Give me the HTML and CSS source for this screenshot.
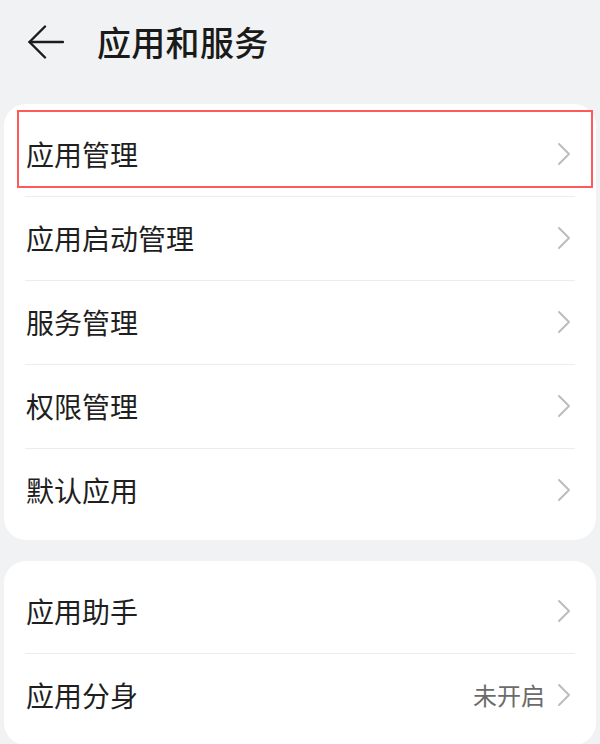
FILE: index.html
```html
<!DOCTYPE html>
<html lang="zh-CN">
<head>
<meta charset="utf-8">
<title>应用和服务</title>
<link rel="stylesheet" href="styles.css">
</head>
<body>
<div class="page">
  <header class="header">
    <svg class="back" width="36" height="34" viewBox="0 0 36 34" aria-hidden="true">
      <polyline points="17,1.5 1.5,17 17,32.5" fill="none" stroke="#1c1c1c" stroke-width="2.4" stroke-linecap="round" stroke-linejoin="round"/>
      <line x1="1.5" y1="17" x2="35" y2="17" stroke="#1c1c1c" stroke-width="2.4" stroke-linecap="round"/>
    </svg>
    <h1 class="title">应用和服务</h1>
  </header>

  <section class="card">
    <div class="highlight"></div>
    <div class="row"><span class="label">应用管理</span><span class="chev"><svg width="14" height="24" viewBox="0 0 14 24"><polyline points="2,2 12,12 2,22" fill="none" stroke="#bdbdbd" stroke-width="2" stroke-linecap="round" stroke-linejoin="round"/></svg></span></div>
    <div class="row"><span class="label">应用启动管理</span><span class="chev"><svg width="14" height="24" viewBox="0 0 14 24"><polyline points="2,2 12,12 2,22" fill="none" stroke="#bdbdbd" stroke-width="2" stroke-linecap="round" stroke-linejoin="round"/></svg></span></div>
    <div class="row"><span class="label">服务管理</span><span class="chev"><svg width="14" height="24" viewBox="0 0 14 24"><polyline points="2,2 12,12 2,22" fill="none" stroke="#bdbdbd" stroke-width="2" stroke-linecap="round" stroke-linejoin="round"/></svg></span></div>
    <div class="row"><span class="label">权限管理</span><span class="chev"><svg width="14" height="24" viewBox="0 0 14 24"><polyline points="2,2 12,12 2,22" fill="none" stroke="#bdbdbd" stroke-width="2" stroke-linecap="round" stroke-linejoin="round"/></svg></span></div>
    <div class="row"><span class="label">默认应用</span><span class="chev"><svg width="14" height="24" viewBox="0 0 14 24"><polyline points="2,2 12,12 2,22" fill="none" stroke="#bdbdbd" stroke-width="2" stroke-linecap="round" stroke-linejoin="round"/></svg></span></div>
  </section>

  <section class="card">
    <div class="row"><span class="label">应用助手</span><span class="chev"><svg width="14" height="24" viewBox="0 0 14 24"><polyline points="2,2 12,12 2,22" fill="none" stroke="#bdbdbd" stroke-width="2" stroke-linecap="round" stroke-linejoin="round"/></svg></span></div>
    <div class="row"><span class="label">应用分身</span><span class="value">未开启</span><span class="chev"><svg width="14" height="24" viewBox="0 0 14 24"><polyline points="2,2 12,12 2,22" fill="none" stroke="#bdbdbd" stroke-width="2" stroke-linecap="round" stroke-linejoin="round"/></svg></span></div>
  </section>
</div>
</body>
</html>
```

FILE: styles.css
```css
* { box-sizing: border-box; }

html, body {
  margin: 0;
  padding: 0;
  background: #f1f2f4;
}

body {
  font-family: "Noto Sans CJK SC", "Noto Sans", "Liberation Sans", sans-serif;
  color: #1f1f1f;
}

.page {
  width: 600px;
  min-height: 744px;
  background: #f1f2f4;
  padding-bottom: 4px;
}

.header {
  height: 84px;
  display: flex;
  align-items: center;
  padding-left: 28px;
  margin-bottom: 20px;
}

.back {
  display: block;
  flex: none;
}

.title {
  margin: 0 0 0 33px;
  font-size: 34px;
  font-weight: 500;
  line-height: 1;
  color: #1a1a1a;
  letter-spacing: 0.3px;
}

.card {
  position: relative;
  margin: 0 4px 21px 4px;
  background: #ffffff;
  border-radius: 22px;
  padding: 8px 0;
}

.row {
  position: relative;
  height: 84px;
  display: flex;
  align-items: center;
  padding: 0 25px 0 22px;
}

.row + .row::before {
  content: "";
  position: absolute;
  left: 21px;
  right: 21px;
  top: 0;
  height: 1px;
  background: #ececec;
}

.label {
  flex: 1;
  font-size: 28px;
  line-height: 1;
  color: #1f1f1f;
}

.value {
  font-size: 24px;
  line-height: 1;
  color: #6b6b6b;
  margin-right: 12px;
}

.chev {
  display: flex;
  align-items: center;
}

.chev svg { display: block; }

.highlight {
  position: absolute;
  left: 13px;
  top: 6px;
  width: 576px;
  height: 78px;
  border: 2px solid #ff5a5a;
  pointer-events: none;
  z-index: 2;
}
```
